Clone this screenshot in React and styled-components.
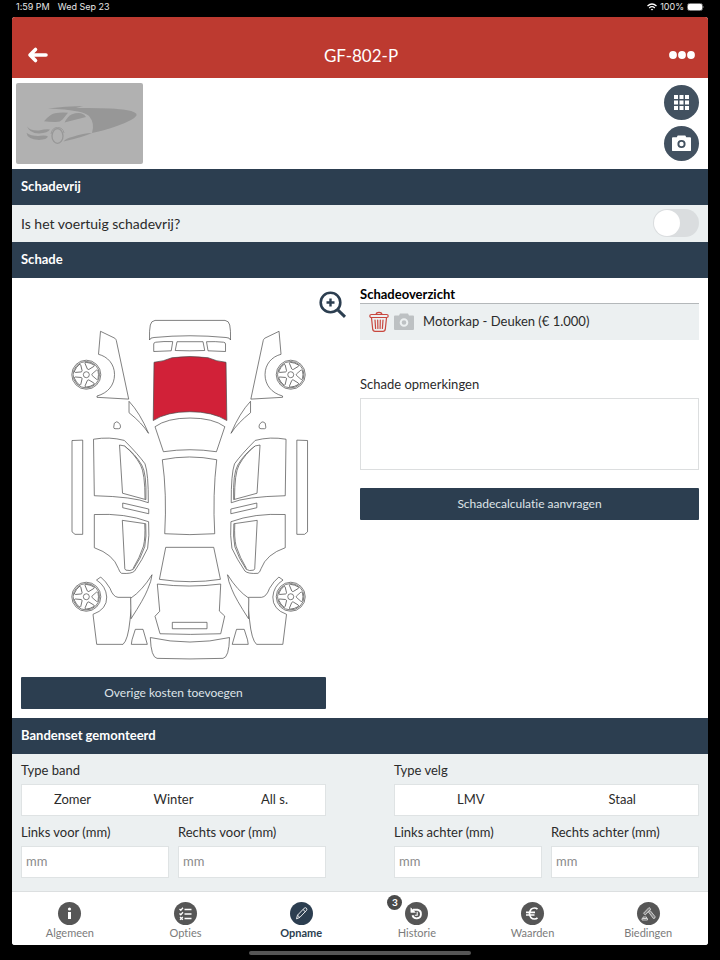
import React, { useState } from 'react';
import styled, { createGlobalStyle } from 'styled-components';

const navy = '#2c3e50';
const light = '#ecf0f1';

const GlobalStyle = createGlobalStyle`
  * {
    box-sizing: border-box;
  }

  body {
    margin: 0;
    background: #000;
    font-variant-ligatures: none;
  }

  body, button, input, textarea {
    font-family: Lato, "Open Sans", sans-serif;
    font-size: 14px;
    color: #2b2b2b;
  }

  button {
    padding: 0;
    border: none;
    background: none;
    cursor: pointer;
    font-variant-ligatures: none;
  }
`;

const Screen = styled.div`
  height: 100vh;
  display: flex;
  flex-direction: column;
  padding: 0 12px;
`;

const StatusBar = styled.div`
  height: 17px;
  flex-shrink: 0;
  display: flex;
  align-items: center;
  justify-content: space-between;
  padding: 0 4px 4px;
  color: #e6e6e6;
  font-family: Inter, sans-serif;
  font-size: 9px;
`;

const StatusGroup = styled.div`
  display: flex;
  align-items: center;
  gap: ${(props) => props.$gap}px;
`;

const Frame = styled.div`
  flex: 1;
  min-height: 0;
  display: flex;
  flex-direction: column;
  border-radius: 3px;
  overflow: hidden;
  background: #fff;
`;

const Header = styled.header`
  height: 61px;
  flex-shrink: 0;
  display: flex;
  align-items: center;
  justify-content: space-between;
  padding: 15px 13px 0 15px;
  background: #bd3a30;
`;

const Title = styled.h1`
  margin: 0;
  color: #fff;
  font-size: 17px;
  font-weight: 400;
`;

const HeaderButton = styled.button`
  width: 28px;
  height: 28px;
  display: flex;
  align-items: center;
  justify-content: ${(props) => props.$align};
`;

const Content = styled.main`
  flex: 1;
  min-height: 0;
  overflow-y: auto;
  scrollbar-width: none;
`;

const PhotoStrip = styled.div`
  display: flex;
  justify-content: space-between;
  padding: 5px 9px 5px 4px;
`;

const Photo = styled.svg`
  width: 127px;
  height: 81px;
  border-radius: 2px;
  background: #b1b1b1;
`;

const PhotoActions = styled.div`
  display: flex;
  flex-direction: column;
  gap: 6px;
  padding-top: 2px;
`;

const RoundButton = styled.button`
  width: 35px;
  height: 35px;
  display: flex;
  align-items: center;
  justify-content: center;
  border-radius: 50%;
  background: #425160;
`;

const SectionTitle = styled.h2`
  height: 36px;
  margin: 0;
  padding: 0 9px;
  color: #fff;
  background: ${navy};
  font-size: 13px;
  font-weight: 700;
  line-height: 35px;
`;

const ToggleRow = styled.label`
  height: 37px;
  display: flex;
  align-items: center;
  justify-content: space-between;
  padding: 0 9px 1px;
  background: ${light};
`;

const Toggle = styled.input`
  appearance: none;
  width: 46px;
  height: 28px;
  margin: 0;
  padding: 1px;
  border-radius: 14px;
  background: ${(props) => (props.checked ? navy : '#dadddf')};
  cursor: pointer;

  &::before {
    content: '';
    display: block;
    width: 26px;
    height: 26px;
    margin-left: ${(props) => (props.checked ? '18px' : '0')};
    border-radius: 50%;
    background: #fff;
  }
`;

const DamagePanel = styled.section`
  display: grid;
  grid-template-columns: 9fr 10fr;
  gap: 34px;
  padding: 7px 9px 9px;
`;

const CarColumn = styled.div`
  position: relative;
  display: flex;
  flex-direction: column;
  gap: 8px;
`;

const ZoomButton = styled.button`
  position: absolute;
  top: 6px;
  right: -21px;
  width: 28px;
  height: 28px;
`;

const CarDrawing = styled.svg`
  display: block;
  width: 100%;
  fill: #fff;
  stroke: #4a4a4a;
  stroke-width: 0.7;
  stroke-linejoin: round;
`;

const PrimaryButton = styled.button`
  width: 100%;
  height: 32px;
  padding-bottom: 2px;
  border-radius: 1px;
  background: ${navy};
  color: #dfe4e8;
  font-size: 12px;
`;

const Overview = styled.div`
  display: flex;
  flex-direction: column;
`;

const OverviewTitle = styled.h3`
  margin: 0;
  border-bottom: 1px solid #b4b8ba;
  color: #000;
  font-size: 13px;
  font-weight: 700;
  line-height: 18px;
`;

const DamageRow = styled.div`
  height: 36px;
  display: flex;
  align-items: center;
  gap: 5px;
  margin-bottom: 35px;
  padding: 0 9px;
  background: ${light};
`;

const DamageText = styled.span`
  padding: 0 0 2px 4px;
  font-size: 13px;
`;

const IconButton = styled.button`
  width: 20px;
  height: 22px;
  display: flex;
  align-items: center;
`;

const Label = styled.label`
  font-size: 13px;
  line-height: 18px;
`;

const Remarks = styled.textarea`
  height: 72px;
  margin: 5px 0 18px;
  padding: 4px;
  border: 1px solid #dcdedf;
  resize: none;
`;

const TyreForm = styled.section`
  display: grid;
  grid-template-columns: 1fr 1fr;
  gap: 68px;
  padding: 7px 9px 40px;
  background: ${light};
`;

const FormColumn = styled.div`
  display: flex;
  flex-direction: column;
  gap: 7px;
`;

const Field = styled.div`
  flex: 1;
  min-width: 0;
  display: flex;
  flex-direction: column;
  gap: 5px;
`;

const FieldRow = styled.div`
  display: flex;
  gap: 9px;
`;

const Segments = styled.div`
  height: 32px;
  display: flex;
  border: 1px solid #dfe3e4;
  background: #fff;
`;

const Segment = styled.button`
  flex: 1;
  padding-bottom: 2px;
  font-size: 13px;
  font-weight: ${(props) => (props.$active ? 700 : 400)};
`;

const NumberInput = styled.input`
  width: 100%;
  height: 32px;
  padding: 0 4px 2px;
  border: 1px solid #dfe3e4;
  font-size: 13px;

  &::placeholder {
    color: #8b8b8b;
  }
`;

const TabBar = styled.nav`
  height: 54px;
  flex-shrink: 0;
  display: flex;
  padding-right: 2px;
  border-top: 1px solid #dcdfe0;
  background: #fff;
`;

const Tab = styled.a`
  flex: 1;
  display: flex;
  flex-direction: column;
  align-items: center;
  padding-top: 10px;
  color: ${(props) => (props.$active ? navy : '#7b7b7b')};
  font-size: 11px;
  font-weight: ${(props) => (props.$active ? 700 : 400)};
  line-height: 16px;
  text-decoration: none;
`;

const TabIcon = styled.span`
  position: relative;
  width: 23px;
  height: 23px;
  border-radius: 50%;
  background: ${(props) => (props.$active ? navy : '#565656')};
`;

const Badge = styled.span`
  position: absolute;
  top: -7px;
  left: -18px;
  width: 15px;
  height: 15px;
  border-radius: 50%;
  background: #4a4a4a;
  color: #fff;
  font-size: 10px;
  font-weight: 700;
  line-height: 15px;
  text-align: center;
`;

const HomeBar = styled.div`
  height: 15px;
  flex-shrink: 0;
  display: flex;
  align-items: center;
  justify-content: center;

  &::after {
    content: '';
    width: 32%;
    height: 4px;
    border-radius: 2px;
    background: #555;
  }
`;

const CameraIcon = ({ color, hole, size }) => (
  <svg width={size} height={size} viewBox="0 0 20 20">
    <path d="M6 1.500h8l1 2H19a1 1 0 0 1 1 1v12.500a1 1 0 0 1-1 1H1a1 1 0 0 1-1-1V4.500a1 1 0 0 1 1-1h4z" fill={color} />
    <circle cx="10" cy="10.500" r="3.300" fill="none" stroke={hole} strokeWidth="2" />
  </svg>
);

const TrashIcon = () => (
  <svg width="20" height="22" viewBox="0 0 20 22" fill="none" stroke="#c9473f" strokeWidth="1.2">
    <rect x="0.800" y="3.500" width="18.400" height="3" rx="1.500" />
    <path d="M7 3.300Q7.400 1.300 10 1.300T13 3.300M2.500 6.700l1.200 11.500Q4 20.400 6 20.400H14Q16 20.400 16.300 18.200L17.500 6.700" />
    <path d="M6 9l.6 8.500M8.700 9l.2 8.500M11.300 9l-.2 8.500M14 9l-.6 8.500" strokeLinecap="round" />
  </svg>
);

const tabIcons = {
  info: (
    <g fill="#fff">
      <circle cx="11.500" cy="7" r="1.600" />
      <path d="M10 10h3v7h-3z" />
    </g>
  ),
  list: (
    <g stroke="#fff" strokeWidth="1.300" fill="none">
      <path d="M10.500 7.500h7M10.500 12h7M10.500 16.500h7" />
      <path d="M5.500 7l1.300 1.300L9 5.800M5.500 11.500l1.300 1.300L9 10.300M6 15l2.800 2.800M8.800 15L6 17.800" />
    </g>
  ),
  pencil: (
    <g stroke="#fff" strokeWidth="0.900" fill="none" strokeLinejoin="round">
      <path d="M6.500 16.800l1-3.600 6.700-7q1.200-1 2.200 0t.1 2.200l-6.700 7zM13 7.500l2.300 2.200M7.500 13.200l2.300 2.200" />
    </g>
  ),
  history: (
    <g stroke="#fff" strokeWidth="1.900" fill="none">
      <path d="M8 7.800H12.500a4.300 4.300 0 1 1-5 5.400" />
      <path d="M12.200 9.800v3.400H9.800" strokeWidth="1.100" />
      <path d="M5.800 5.800v4.600h4.600z" fill="#fff" strokeWidth="0.500" />
    </g>
  ),
  euro: (
    <path d="M16.500 7.200Q15.300 6 13.500 6 9 6 8.500 11.500 9 17 13.500 17q1.800 0 3-1.200M5 10.300h9M5 13h8.500" stroke="#fff" strokeWidth="1.700" fill="none" />
  ),
  hammer: (
    <g stroke="#d8d8d8" strokeWidth="0.900" fill="none" strokeLinejoin="round">
      <path d="M12 5.500l1.800 1.600-5.500 5.800-1.800-1.600zM11.500 10l1.600-1.500 5 6.200q.3 2-1.700 1.800z" fill="#858585" />
      <path d="M5 18v-1.500h5.500V18zM6 16.500V15h3.500v1.500z" />
    </g>
  ),
};

const Wheel = ({ x, y }) => (
  <g transform={`translate(${x} ${y})`}>
    <circle r="14.500" />
    <circle r="13.200" />
    <circle r="3" />
    {[0, 72, 144, 216, 288].map((angle) => (
      <path key={angle} transform={`rotate(${angle})`} d="M5.800-.8L10.200-4.600Q11.300-5.200 11.700-4Q12.700 0 11.700 4Q11.300 5.200 10.200 4.600L5.800.8Q5.200 0 5.800-.8z" />
    ))}
  </g>
);

const CarSide = () => (
  <>
    <path d="M100.500 331.300l14.300 6.900q1.200 1 1.500 2.300l12.400 58.600-31.700-1.800v-1.300c11-3 17.500-11 17.500-21.500s-7-18-16-20.200z" />
    <path d="M129 401.300Q140 413 148.500 433.300 142 423 129 412.700z" />
    <path d="M114.300 423.200q2.500-2.400 4-.8 2.600 2.400 2.200 4.500-.2 1.900-2 1.800h-3.500q-1.300 0-1.300-1.500z" />
    <path d="M72 440.500l10.700-.4v94.200H75l-3-2.500z" />
    <path d="M93.500 439.200q16-2.800 30.800 1.200 14 14 20.700 23.400 3.500 10 3.300 38.900-14-6-54-7z" />
    <path d="M119.500 445l4.800.9q11 8 17.400 19.100 5 8 4.200 34.600l-23.400-6.400z" />
    <path d="M124.500 446q10 8 16 19 4.500 8 4.500 34" />
    <path d="M122.700 503l26 6v4.700l-26-6z" />
    <path d="M94.300 514.500q31-1.500 54.300 7.200 1 14-1 26.600-5 11-13 22.700-3 3-13 2.300-1.800-.5-3.300-5-5-14-24-20.600z" />
    <path d="M122.300 520.300l23.400 3.400q1 13-1 23-4 12-11.400 22.600-3 2-7.500.8l-1-1.300z" />
    <path d="M144.700 524q.8 13-1.200 22-4 12-10.500 22.600" />
    <path d="M96.500 580l4.200-3q5 4 9.300 11.300 3 8.500 8 9H131q1 10-1 22.700-2 20-7 24.300H96.700L93 614.300q14-5 13.700-17.300Q106 586 96.500 580z" />
    <path d="M152 574.700q-10 16-21.300 23.500l.3 20.500q13-20 16.500-29 4-9 4.500-15z" />
    <path d="M135.300 629.300h7.700l4.300 15h-16l.7-4.500z" />
  </>
);

const Car = () => (
  <CarDrawing viewBox="21 285 305 384" role="img" aria-label="Schade">
    <CarSide />
    <g transform="translate(379.500 0) scale(-1 1)">
      <CarSide />
    </g>
    <Wheel x={86.300} y={374.700} />
    <Wheel x={290.700} y={374.700} />
    <Wheel x={86.300} y={596.700} />
    <Wheel x={290.700} y={596.700} />
    <path d="M149.500 340q-.3-10 .8-15 .7-4 4.700-4.600h70q4 .6 4.700 4.600 1.100 5 .8 15-.7-2.500-4.500-2.500-36-3.500-72 0-3.800 0-4.500 2.500z" />
    <path d="M153.700 344q0-1.500 2-1.800 8-1 17-.6l-1.500 9.200-17.500.7zM177 341.700h26l1.700 8.800q-15 .7-29.500 0zM206.500 341.700q9-.4 17 .5 2 .3 2 1.800v7.500L208 350.800z" />
    <path fill="#d12138" d="M154 362.300q10-1 18-4.600 18-2.500 36 0 8 3.600 18 4.600l.8 58.200q-14-8.800-37-8.800t-36.600 8.800z" />
    <path d="M155 426.700q12-8.700 35-8.700t34.800 8.700l-8.400 25q-26.400-4-53 0z" />
    <path d="M162.300 459.700q27-5.500 54.400 0-4.200 35-2 74-24.700 1.800-50 0 2.300-40-2.400-74z" />
    <path d="M165.700 547.300h48l6.700 32q-30 4.700-61 0z" />
    <path d="M157.300 584q32 4 63.400 0l-1.400 27 5.400 5-4 17.700q-30 1.300-60.700 0l-5-17.500 4.700-5z" />
    <path d="M172.300 622.300H207v6.400h-34.700z" />
    <path d="M150.300 637.500q39.700 9 79.200 0-.5 20-6.500 20.800-33 1.200-66 0-6-1-6.700-20.800z" />
  </CarDrawing>
);

const tabs = [
  { name: 'Algemeen', icon: 'info' },
  { name: 'Opties', icon: 'list' },
  { name: 'Opname', icon: 'pencil' },
  { name: 'Historie', icon: 'history', badge: 3 },
  { name: 'Waarden', icon: 'euro' },
  { name: 'Biedingen', icon: 'hammer' },
];

const TyreColumn = ({ label, options, inputs }) => {
  const [selected, setSelected] = useState(null);
  return (
    <FormColumn>
      <Field>
        <Label as="span">{label}</Label>
        <Segments role="group" aria-label={label}>
          {options.map((option) => (
            <Segment key={option} $active={selected === option} onClick={() => setSelected(option)}>
              {option}
            </Segment>
          ))}
        </Segments>
      </Field>
      <FieldRow>
        {inputs.map((name) => (
          <Field key={name}>
            <Label htmlFor={name}>{name}</Label>
            <NumberInput id={name} placeholder="mm" inputMode="decimal" />
          </Field>
        ))}
      </FieldRow>
    </FormColumn>
  );
};

const App = () => {
  const [damageFree, setDamageFree] = useState(false);

  return (
    <Screen>
      <GlobalStyle />
      <StatusBar>
        <StatusGroup $gap={8}>
          <span>1:59 PM</span>
          <span>Wed Sep 23</span>
        </StatusGroup>
        <StatusGroup $gap={3}>
          <svg width="10" height="8" viewBox="0 0 10 8" fill="none" stroke="#fff" strokeWidth="1.300">
            <path d="M.5 3q4.500-4 9 0M2.200 4.900q2.800-2.500 5.600 0" />
            <path d="M5 7.500L3.700 6.200q1.300-1 2.600 0z" fill="#fff" stroke="none" />
          </svg>
          <span>100%</span>
          <svg width="17" height="8" viewBox="0 0 17 8">
            <rect x="0.500" y="0.500" width="15" height="7" rx="2" fill="none" stroke="#777" />
            <rect x="1" y="1" width="14" height="6" rx="1.300" fill="#fff" />
            <path d="M16.200 3v2q.8-.3.800-1t-.8-1z" fill="#777" />
          </svg>
        </StatusGroup>
      </StatusBar>
      <Frame>
        <Header>
          <HeaderButton $align="flex-start" aria-label="Terug">
            <svg width="22" height="18" viewBox="0 0 22 18" fill="none" stroke="#fff" strokeWidth="3.600" strokeLinecap="round" strokeLinejoin="round">
              <path d="M8.500 3.500L3 9l5.500 5.500M3.500 9H19" />
            </svg>
          </HeaderButton>
          <Title>GF-802-P</Title>
          <HeaderButton $align="flex-end" aria-label="Meer">
            <svg width="28" height="8" viewBox="0 0 28 8" fill="#fff">
              <circle cx="6" cy="4" r="3.900" />
              <circle cx="15" cy="4" r="3.900" />
              <circle cx="24" cy="4" r="3.900" />
            </svg>
          </HeaderButton>
        </Header>
        <Content>
          <PhotoStrip>
            <Photo viewBox="0 0 127 81" fill="#979797">
              <path d="M32 25.500Q49 23 67 23L60 25Q96 24.500 110 27 122 29 120.500 32.500 118 37 101 43 87 48 76 50 79 40 73 33 69 29.500 62 28.500 50 26 32 25.500z" />
              <path d="M47.500 58.500Q50 55 56 54 68 50 76 50 66 54.500 47.500 58.500z" />
              <path d="M28 38.200Q34 31 39 30.200 45 29 52 29.700L46.500 36.500Q44 39.300 39 39 32 39 28 38.200z" />
              <path d="M48.500 39.500Q52 33 55.500 31.500 60 29.700 65 30.200 69 31.500 70 34 60 36.500 48.500 39.500z" />
              <path d="M11 43.200Q14 48 23 47.500 31 45.500 34 46.500 32 50 23 50.500 13 50 11 43.200z" />
              <path d="M10.500 49.700Q15 53 22 53 30 52 32 53.500 31 56.500 23 57 11 56 10.500 49.700z" />
              <ellipse cx="41.500" cy="53" rx="5.500" ry="7.300" fill="#b1b1b1" stroke="#979797" strokeWidth="1.300" />
              <path d="M35 51Q36 44.500 41.500 44.500T48 50" fill="none" stroke="#979797" strokeWidth="0.900" />
            </Photo>
            <PhotoActions>
              <RoundButton aria-label="Foto-overzicht">
                <svg width="15" height="15" viewBox="0 0 15 15" fill="#fff">
                  {[0, 5.500, 11].map((y) => [0, 5.500, 11].map((x) => (
                    <rect key={`${x}-${y}`} x={x} y={y} width="4" height="4" />
                  )))}
                </svg>
              </RoundButton>
              <RoundButton aria-label="Foto maken">
                <CameraIcon color="#fff" hole="#425160" size={19} />
              </RoundButton>
            </PhotoActions>
          </PhotoStrip>

          <SectionTitle>Schadevrij</SectionTitle>
          <ToggleRow>
            Is het voertuig schadevrij?
            <Toggle type="checkbox" role="switch" checked={damageFree} onChange={() => setDamageFree(!damageFree)} />
          </ToggleRow>

          <SectionTitle>Schade</SectionTitle>
          <DamagePanel>
            <CarColumn>
              <Car />
              <ZoomButton aria-label="Inzoomen">
                <svg width="28" height="28" viewBox="0 0 28 28" fill="none" stroke={navy}>
                  <circle cx="11.500" cy="11.500" r="9.800" strokeWidth="2.600" />
                  <path d="M11.500 7.500v8M7.500 11.500h8" strokeWidth="2.400" />
                  <path d="M18.800 18.800l7.200 7" strokeWidth="3" />
                </svg>
              </ZoomButton>
              <PrimaryButton>Overige kosten toevoegen</PrimaryButton>
            </CarColumn>
            <Overview>
              <OverviewTitle>Schadeoverzicht</OverviewTitle>
              <DamageRow>
                <IconButton aria-label="Verwijderen">
                  <TrashIcon />
                </IconButton>
                <IconButton aria-label="Foto toevoegen">
                  <CameraIcon color="#bdc1c3" hole={light} size={20} />
                </IconButton>
                <DamageText>Motorkap - Deuken (€ 1.000)</DamageText>
              </DamageRow>
              <Label htmlFor="remarks">Schade opmerkingen</Label>
              <Remarks id="remarks" />
              <PrimaryButton>Schadecalculatie aanvragen</PrimaryButton>
            </Overview>
          </DamagePanel>

          <SectionTitle>Bandenset gemonteerd</SectionTitle>
          <TyreForm>
            <TyreColumn label="Type band" options={['Zomer', 'Winter', 'All s.']} inputs={['Links voor (mm)', 'Rechts voor (mm)']} />
            <TyreColumn label="Type velg" options={['LMV', 'Staal']} inputs={['Links achter (mm)', 'Rechts achter (mm)']} />
          </TyreForm>
        </Content>
        <TabBar>
          {tabs.map(({ name, icon, badge }) => (
            <Tab key={name} href={`#${name.toLowerCase()}`} $active={name === 'Opname'}>
              <TabIcon $active={name === 'Opname'}>
                <svg width="23" height="23" viewBox="0 0 23 23">{tabIcons[icon]}</svg>
                {badge && <Badge>{badge}</Badge>}
              </TabIcon>
              {name}
            </Tab>
          ))}
        </TabBar>
      </Frame>
      <HomeBar />
    </Screen>
  );
};

export default App;
